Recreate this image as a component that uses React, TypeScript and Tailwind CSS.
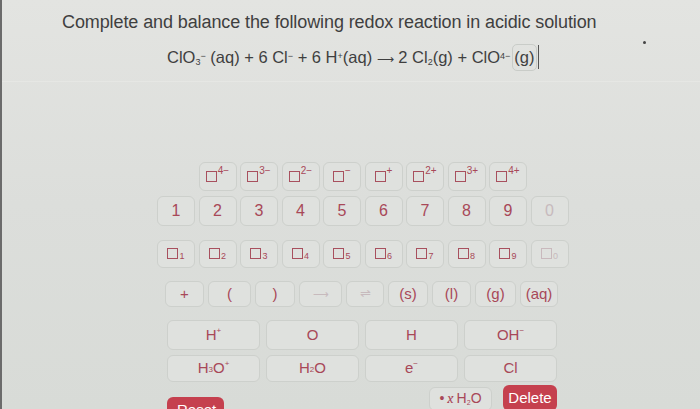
import React from "react";

const font = { fontFamily: '"Liberation Sans", Arial, sans-serif' };

function Sq({ faded }: { faded?: boolean }) {
  return (
    <span
      className={`inline-block h-[11px] w-[11px] border-[1.5px] ${
        faded ? "border-[#c9b9bd]" : "border-[#a8505e]"
      }`}
    />
  );
}

function Key({
  children,
  className = "",
  faded,
}: {
  children: React.ReactNode;
  className?: string;
  faded?: boolean;
}) {
  return (
    <div
      className={`flex items-center justify-center rounded-[6px] border border-[#cdd0cc] bg-[#dfe1de] ${
        faded ? "text-[#c7babd]" : "text-[#a84858]"
      } ${className}`}
    >
      {children}
    </div>
  );
}

export default function App() {
  const charges = ["4−", "3−", "2−", "−", "+", "2+", "3+", "4+"];
  const nums = ["1", "2", "3", "4", "5", "6", "7", "8", "9", "0"];

  return (
    <div
      className="relative h-[409px] w-[700px] overflow-hidden border-l-2 border-[#6b6b6b] bg-gradient-to-b from-[#e3e4e1] via-[#dcdedb] to-[#d8dbd7]"
      style={font}
    >
      {/* question */}
      <div className="border-b border-[#e6e7e4] pb-[10px]">
        <div className="pl-[60px] pt-[9px] text-[18px] tracking-[-0.1px] text-[#3f3f3f]">
          Complete and balance the following redox reaction in acidic solution
        </div>
        <div className="mt-[8px] flex items-center pl-[165px] text-[16.5px] text-[#3f3f3f]">
          <span>
            ClO<sub className="text-[9px]">3</sub>
            <sup className="text-[9px]">−</sup> (aq) + 6 Cl<sup className="text-[9px]">−</sup> + 6 H
            <sup className="text-[9px]">+</sup>(aq) <span className="text-[12px]">⟶</span> 2 Cl
            <sub className="text-[9px]">2</sub>(g) + ClO<sup className="text-[9px]">4−</sup>
          </span>
          <span className="ml-[2px] rounded-[5px] border border-[#c9ccc8] px-[1px]">(g)</span>
          <span className="ml-[1px] h-[24px] w-[1px] bg-[#555]" />
        </div>
        <span className="absolute left-[641px] top-[41px] h-[3px] w-[3px] rounded-full bg-[#444]" />
      </div>

      {/* keypad */}
      <div className="ml-[155px] mt-[80px] flex w-[412px] flex-col gap-[5px] text-[15px]">
        <div className="grid grid-cols-[repeat(10,38px)] gap-x-[3.5px]">
          {charges.map((c, i) => (
            <Key key={c} className={`h-[29px] ${i === 0 ? "col-start-2" : ""}`}>
              <Sq />
              <sup className="ml-[1px] text-[10px]">{c}</sup>
            </Key>
          ))}
        </div>
        <div className="grid grid-cols-[repeat(10,38px)] gap-x-[3.5px]">
          {nums.map((n) => (
            <Key key={n} className="h-[30px] text-[16px]" faded={n === "0"}>
              {n}
            </Key>
          ))}
        </div>
        <div className="mt-[9px] grid grid-cols-[repeat(10,38px)] gap-x-[3.5px]">
          {nums.map((n) => (
            <Key key={n} className="h-[28px]" faded={n === "0"}>
              <Sq faded={n === "0"} />
              <sub className="ml-[1px] text-[9px]">{n}</sub>
            </Key>
          ))}
        </div>
        <div className="ml-[8px] mt-[8px] flex gap-[4px]">
          <Key className="h-[26px] w-[39px]">+</Key>
          <Key className="h-[26px] w-[43px]">(</Key>
          <Key className="h-[26px] w-[40px]">)</Key>
          <Key className="h-[26px] w-[43px] text-[11px]" faded>
            ⟶
          </Key>
          <Key className="h-[26px] w-[38px] text-[13px]" faded>
            ⇌
          </Key>
          <Key className="h-[26px] w-[40px]">(s)</Key>
          <Key className="h-[26px] w-[39px]">(l)</Key>
          <Key className="h-[26px] w-[41px]">(g)</Key>
          <Key className="h-[26px] w-[38px]">(aq)</Key>
        </div>
        <div className="ml-[10px] mt-[8px] grid grid-cols-[repeat(4,93px)] gap-x-[6px]">
          <Key className="h-[30px]">
            H<sup className="text-[8px]">+</sup>
          </Key>
          <Key className="h-[30px]">O</Key>
          <Key className="h-[30px]">H</Key>
          <Key className="h-[30px]">
            OH<sup className="text-[8px]">−</sup>
          </Key>
        </div>
        <div className="ml-[10px] grid grid-cols-[repeat(4,93px)] gap-x-[6px]">
          <Key className="h-[27px]">
            H<sub className="text-[8px]">3</sub>O<sup className="text-[8px]">+</sup>
          </Key>
          <Key className="h-[27px]">
            H<sub className="text-[8px]">2</sub>O
          </Key>
          <Key className="h-[27px]">
            e<sup className="text-[8px]">−</sup>
          </Key>
          <Key className="h-[27px]">Cl</Key>
        </div>
        <div className="ml-[10px] mt-[-2px] flex items-start">
          <div className="mt-[12px] h-[26px] w-[57px] rounded-[6px] bg-[#c5404e] px-[10px] pt-[2px] text-[15px] text-white">
            Reset
          </div>
          <div className="ml-auto mr-[11px] mt-[2px] flex h-[24px] w-[63px] items-center justify-center rounded-[6px] border border-[#cdd0cc] bg-[#dfe1de] text-[14px] text-[#a84858]">
            • <i className="ml-[3px] font-serif">x</i>
            <span className="ml-[3px]">
              H<sub className="text-[7px]">2</sub>O
            </span>
          </div>
          <div className="mr-[12px] flex h-[26px] w-[54px] items-center justify-center rounded-[6px] bg-[#c5404e] text-[15px] text-white">
            Delete
          </div>
        </div>
      </div>
    </div>
  );
}
